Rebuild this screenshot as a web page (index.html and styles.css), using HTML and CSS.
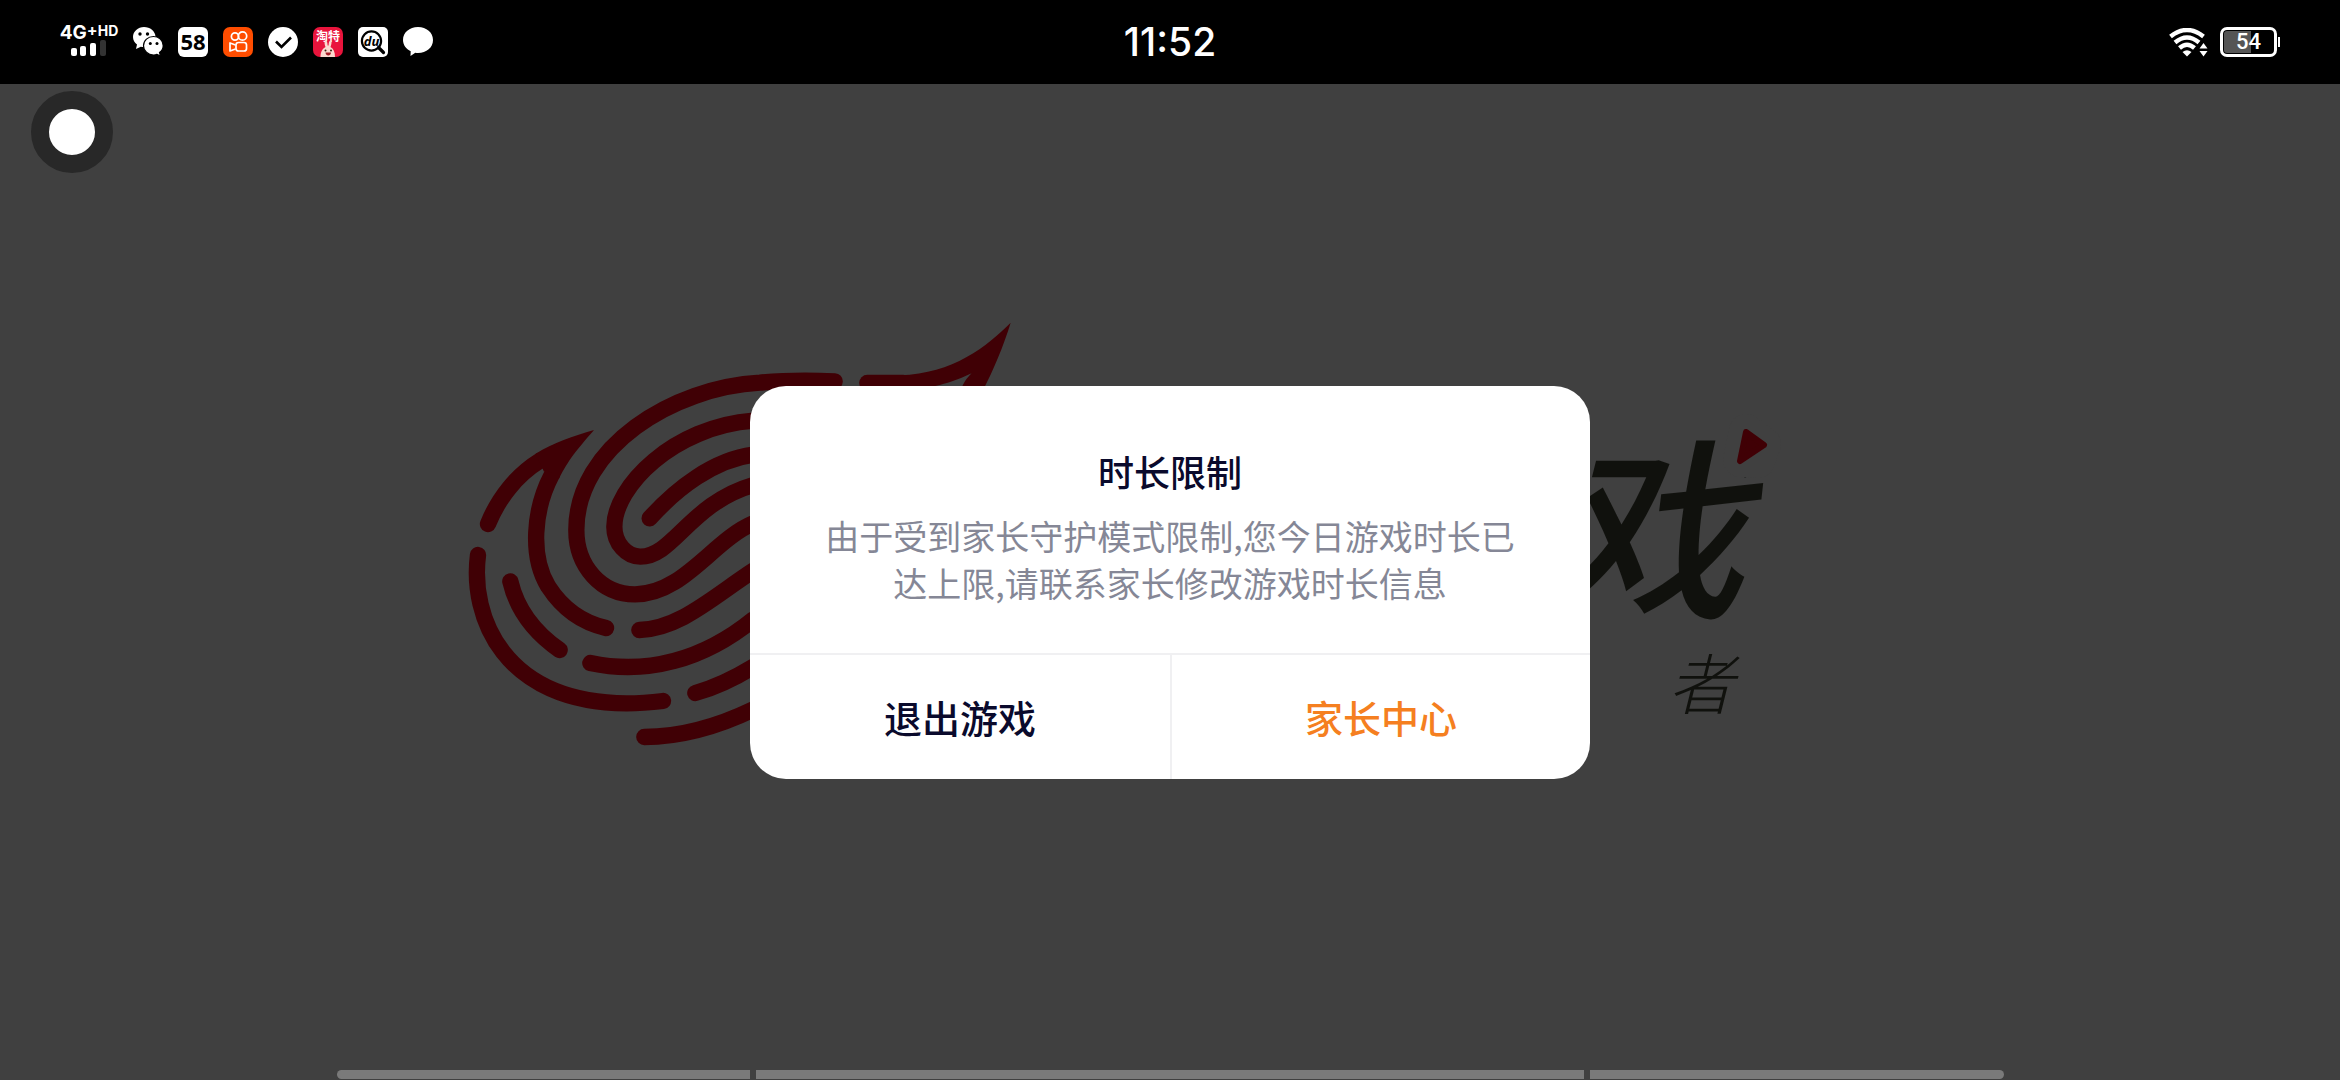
FILE: index.html
```
<!DOCTYPE html>
<html lang="zh-CN">
<head>
<meta charset="utf-8">
<meta name="viewport" content="width=device-width, initial-scale=1">
<title>时长限制</title>
<link rel="stylesheet" href="styles.css">
</head>
<body>
<header class="status">
  <div class="status-left">
    <div class="signal">
      <div class="network"><span>4G</span><span class="plus">+</span><span class="hd">HD</span></div>
      <svg class="bars" viewBox="0 0 36 16" aria-hidden="true">
        <rect x="0" y="8" width="6" height="8" rx="2" fill="#fff"/>
        <rect x="9" y="6" width="6" height="10" rx="2" fill="#fff"/>
        <rect x="19" y="3" width="6" height="13" rx="2" fill="#fff"/>
        <rect x="29" y="0" width="6" height="16" rx="2" fill="#333"/>
      </svg>
    </div>
    <svg class="icon" viewBox="0 0 30 30" aria-hidden="true">
      <path d="M11 0C5 0 0 4.500 0 10c0 3.200 1.600 5.800 4 7.600L3 22l4.800-2.300c1 .3 2.100.4 3.200.4C17 20 22.500 16 22.500 10S17 0 11 0Z" fill="#fff"/>
      <path d="M20.500 9.500C15 9.500 10.500 13.500 10.500 18.700S15 28 20.500 28c1.200 0 2.400-.2 3.500-.6L27.500 29l-1-3.500c2.200-1.700 3.700-4 3.700-6.800 0-5.200-4.300-9.200-9.700-9.200Z" fill="#fff" stroke="#000" stroke-width="1.200"/>
      <circle cx="7" cy="7" r="1.700"/><circle cx="14.500" cy="7" r="1.700"/><circle cx="17.300" cy="16.500" r="1.500"/><circle cx="24" cy="16.500" r="1.500"/>
    </svg>
    <svg class="icon" viewBox="0 0 30 30" aria-hidden="true">
      <rect width="30" height="30" rx="6" fill="#fff"/>
      <text class="mark-58" x="15" y="23" text-anchor="middle">58</text>
    </svg>
    <svg class="icon" viewBox="0 0 30 30" aria-hidden="true">
      <rect width="30" height="30" rx="7" fill="#ff4d00"/>
      <g fill="none" stroke="#fff" stroke-width="1.700"><circle cx="12" cy="9.500" r="3.600"/><circle cx="19.500" cy="9" r="4.200"/><rect x="13" y="15.500" width="10.500" height="8.500" rx="2.500"/><path d="M12.500 18 7 16v8l5.500-2" stroke-linejoin="round"/></g>
    </svg>
    <svg class="icon" viewBox="0 0 30 30" aria-hidden="true"><circle cx="15" cy="15" r="15" fill="#fff"/><path d="m8 14.500 5.500 5.500L23 10.500" fill="none" stroke="#000" stroke-width="2.600"/></svg>
    <svg class="icon" viewBox="0 0 30 30" aria-hidden="true">
      <rect width="30" height="30" rx="7" fill="#e9143c"/>
      <text class="mark-taote" x="15" y="14" text-anchor="middle">淘特</text>
      <path d="M12.500 20C11 16 11.500 13.500 12.700 13.500c1.300 0 1.900 2.500 1.900 5h1c0-2.500.6-5 1.900-5 1.200 0 1.600 2.500 0 6.500 3 1.500 4.500 5 4.500 10H7.500c0-5 2-8.500 5-10Z" fill="#fbd9cf"/>
      <circle cx="12.500" cy="23.500" r="1" fill="#321"/><circle cx="18" cy="23.500" r="1" fill="#321"/><path d="M12.500 25.500h5.500c0 4-5.500 4-5.500 0Z" fill="#a51a24"/>
    </svg>
    <svg class="icon" viewBox="0 0 30 30" aria-hidden="true">
      <rect width="30" height="30" rx="5" fill="#fff"/>
      <circle cx="13.500" cy="14" r="9.600" fill="none" stroke="#000" stroke-width="2.200"/>
      <path d="m20.500 20.500 5 5" stroke="#000" stroke-width="3.200" stroke-linecap="round"/>
      <text class="mark-du" x="13.500" y="18.500" text-anchor="middle">du</text>
    </svg>
    <svg class="icon" viewBox="0 0 30 30" aria-hidden="true"><path d="M15 0c8.500 0 15 5.500 15 13s-6.500 13-15 13c-1 0-1.800-.1-2.700-.2L7.500 29l.2-4.800C3.200 22 0 18 0 13 0 5.500 6.500 0 15 0Z" fill="#fff"/></svg>
  </div>
  <time class="clock">11:52</time>
  <div class="status-right">
    <svg class="wifi" viewBox="0 0 39 29" aria-hidden="true">
      <g fill="none" stroke="#fff" stroke-width="4.400"><path d="M1.500 8.500Q18 -4.500 34.500 8.500"/><path d="M6 14.500Q18 4.500 30 14.500"/><path d="M10.500 20Q18 13.500 25.500 20"/></g>
      <path d="M13.500 24q4.500-3.500 9 0L18 28.500Z" fill="#fff"/>
      <path d="m30.500 20.500 4-5.500 4 5.500Zm0 2.500 4 5.500 4-5.500Z" fill="#fff"/>
    </svg>
    <div class="battery"><span>54</span></div>
  </div>
</header>

<main class="stage">
  <svg class="artwork" viewBox="0 0 2340 996" aria-hidden="true">
    <g transform="translate(460 276) scale(.33333)" fill="none" stroke="#400005" stroke-width="49" stroke-linecap="round">
      <path d="M1124 64C1040 60 980 60 900 68C640 82 349 260 349 510C349 620 425 703 525 703C670 703 760 540 880 490"/>
      <path d="M880 182C640 200 463 380 463 500C463 550 500 590 541 590C640 590 690 430 880 375"/>
      <path d="M569 475C650 385 760 300 880 284"/>
      <path d="M538 810C660 806 760 710 880 632"/>
      <path d="M391 909C560 945 730 900 880 778"/>
      <path d="M706 999Q790 975 880 920"/>
      <path d="M553 1131Q710 1130 880 1048"/>
      <path d="M54 585C30 770 130 1028 500 1030Q550 1030 609 1023"/>
      <path d="M151 664C170 745 220 815 299 870"/>
      <path d="M84 492C115 415 170 345 240 302"/>
      <path d="M275 345C220 450 210 590 265 680Q330 780 438 804"/>
      <path d="M402 210C340 228 280 248 227 281L252 335L262 330L297 356C325 300 350 270 402 210Z" fill="#400005" stroke="none"/>
    </g>
    <g transform="translate(740 226) scale(.33333)" fill="#400005">
      <path d="M382 219H490" stroke="#400005" stroke-width="49" stroke-linecap="round"/>
      <path d="M812 38C740 110 640 190 480 196L480 243C600 232 640 215 695 190C680 205 670 218 662 243L728 243C760 180 790 110 812 38Z"/>
    </g>
    <text class="brand" x="1551" y="519">戏</text>
    <text class="tagline" x="1668" y="625">者</text>
    <path d="M1746 347L1764 360L1758 377L1740 376Z" fill="#404040" stroke="#404040" stroke-width="34" stroke-linejoin="round"/>
    <path d="M1746 348L1764 361L1740 377Z" fill="#400005" stroke="#400005" stroke-width="6" stroke-linejoin="round"/>
  </svg>

  <button class="assist" type="button" aria-label="悬浮球"></button>

  <section class="dialog" role="dialog" aria-labelledby="title" aria-describedby="message">
    <div class="dialog-body">
      <h1 class="title" id="title">时长限制</h1>
      <p class="message" id="message">由于受到家长守护模式限制,您今日游戏时长已达上限,请联系家长修改游戏时长信息</p>
    </div>
    <div class="actions">
      <button class="action" type="button">退出游戏</button>
      <button class="action action-primary" type="button">家长中心</button>
    </div>
  </section>

  <div class="home-bar"><span></span><span></span><span></span></div>
</main>
</body>
</html>
```
FILE: styles.css
```
* { box-sizing: border-box; }

body {
  margin: 0;
  min-height: 100vh;
  display: flex;
  flex-direction: column;
  background: #404040;
  font-family: "Noto Sans CJK SC", sans-serif;
}

button {
  border: 0;
  padding: 0;
  background: none;
  font: inherit;
  cursor: pointer;
}

/* Status bar */
.status {
  display: grid;
  grid-template-columns: 1fr auto 1fr;
  align-items: center;
  height: 84px;
  padding: 0 60px;
  background: #000;
  color: #fff;
  font-family: Inter, sans-serif;
}

.status-left,
.status-right {
  display: flex;
  align-items: center;
}

.status-left { gap: 15px; }
.status-right { justify-content: flex-end; gap: 12px; }

.signal {
  width: 58px;
  display: flex;
  flex-direction: column;
  align-items: center;
  padding-bottom: 4px;
}

.network {
  display: flex;
  height: 16px;
  font-size: 19px;
  font-weight: 700;
  line-height: 18px;
}

.plus { font-size: 16px; line-height: 12px; }
.hd { font-size: 14px; line-height: 14px; }

.bars { width: 36px; height: 16px; }

.icon {
  flex: none;
  width: 30px;
  height: 30px;
}

.mark-58 { font: 700 22px "Noto Sans", sans-serif; }

.mark-taote {
  fill: #fff;
  font: 700 12px "Noto Sans CJK SC", sans-serif;
}

.mark-du { font: italic 700 13px "Noto Sans", sans-serif; }

.clock {
  font-size: 39px;
  font-weight: 500;
  line-height: 48px;
}

.wifi { width: 39px; height: 29px; }

.battery {
  position: relative;
  width: 57px;
  height: 30px;
  margin-right: 3px;
  border: 3px solid #fff;
  border-radius: 7px;
  background: linear-gradient(90deg, #555 54%, #000 54%);
  box-shadow: inset 0 0 0 1px #000;
  font: 500 22px/24px Roboto, sans-serif;
  text-align: center;
}

.battery::after {
  content: "";
  position: absolute;
  top: 7px;
  right: -6px;
  width: 2px;
  height: 10px;
  background: #fff;
}

/* Splash artwork with the dialog over it */
.stage {
  position: relative;
  flex: 1;
  display: flex;
  align-items: center;
  justify-content: center;
  padding: 24px;
}

.artwork {
  position: absolute;
  inset: 0;
  width: 100%;
  height: 100%;
}

.brand {
  fill: #10110d;
  font: italic 500 194px "Noto Sans CJK SC", sans-serif;
}

.tagline {
  fill: #10110d;
  font: italic 300 66px "Noto Sans CJK SC", sans-serif;
}

.assist {
  position: absolute;
  top: 7px;
  left: 31px;
  width: 82px;
  height: 82px;
  border: 18px solid #282828;
  border-radius: 50%;
  background: #fff;
}

.dialog {
  position: relative;
  width: 100%;
  max-width: 840px;
  overflow: hidden;
  border-radius: 36px;
  background: #fff;
  text-align: center;
}

.dialog-body { padding: 58px 70px 47px; }

.title {
  margin: 0 0 14px;
  color: #0a0a2c;
  font-size: 36px;
  font-weight: 500;
  line-height: 54px;
}

.message {
  margin: 0;
  color: #858796;
  font-size: 34px;
  font-weight: 400;
  line-height: 47px;
}

.actions {
  display: grid;
  grid-template-columns: 1fr 1fr;
  border-top: 2px solid #f0f0f2;
}

.action {
  height: 124px;
  color: #0a0a2c;
  font-size: 38px;
  font-weight: 500;
}

.action-primary {
  border-left: 2px solid #f0f0f2;
  color: #f57f20;
}

/* Gesture bar along the bottom edge */
.home-bar {
  position: absolute;
  right: 0;
  bottom: 1px;
  left: 0;
  display: grid;
  grid-template-columns: 1fr 2fr 1fr;
  gap: 6px;
  margin: 0 auto;
  max-width: 1667px;
  height: 9px;
}

.home-bar span { background: #7a7a7a; }
.home-bar span:first-child { border-radius: 5px 0 0 5px; }
.home-bar span:last-child { border-radius: 0 5px 5px 0; }
```
